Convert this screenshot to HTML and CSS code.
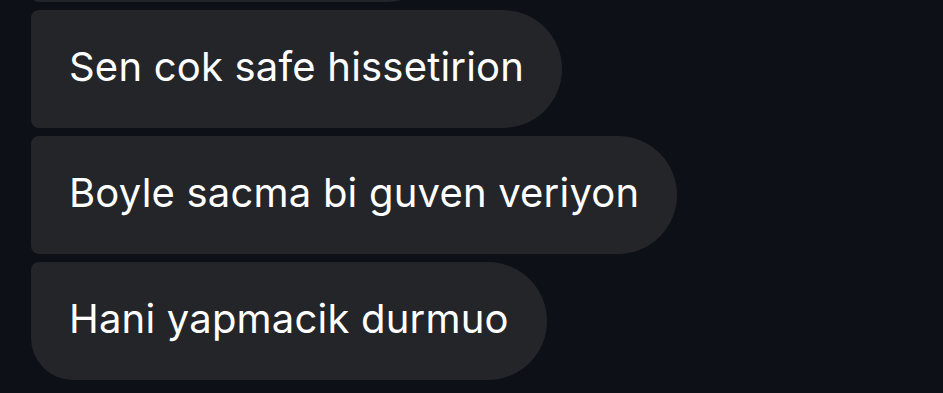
FILE: index.html
```html
<!DOCTYPE html>
<html>
<head>
<meta charset="utf-8">
<link rel="stylesheet" href="styles.css">
</head>
<body>
<div class="thread">
  <div class="bubble bubble-cut"></div>
  <div class="bubble">Sen cok safe hissetirion</div>
  <div class="bubble">Boyle sacma bi guven veriyon</div>
  <div class="bubble last">Hani yapmacik durmuo</div>
</div>
</body>
</html>
```
FILE: styles.css
```css
html, body {
  margin: 0;
  padding: 0;
  background: #0d1016;
  overflow: hidden;
}
.thread {
  display: flex;
  flex-direction: column;
  align-items: flex-start;
  gap: 8px;
  padding-left: 31px;
}
.bubble {
  box-sizing: border-box;
  height: 118px;
  display: flex;
  align-items: center;
  padding: 0 38px 6px 38px;
  background: #232529;
  color: #ffffff;
  font-family: Inter, "Noto Sans", sans-serif;
  font-size: 40px;
  letter-spacing: 0.2px;
  border-radius: 8px 59px 59px 8px;
  white-space: nowrap;
}
.bubble-cut {
  margin-top: -116px;
  width: 414px;
}
.last {
  border-bottom-left-radius: 42px;
}
```
